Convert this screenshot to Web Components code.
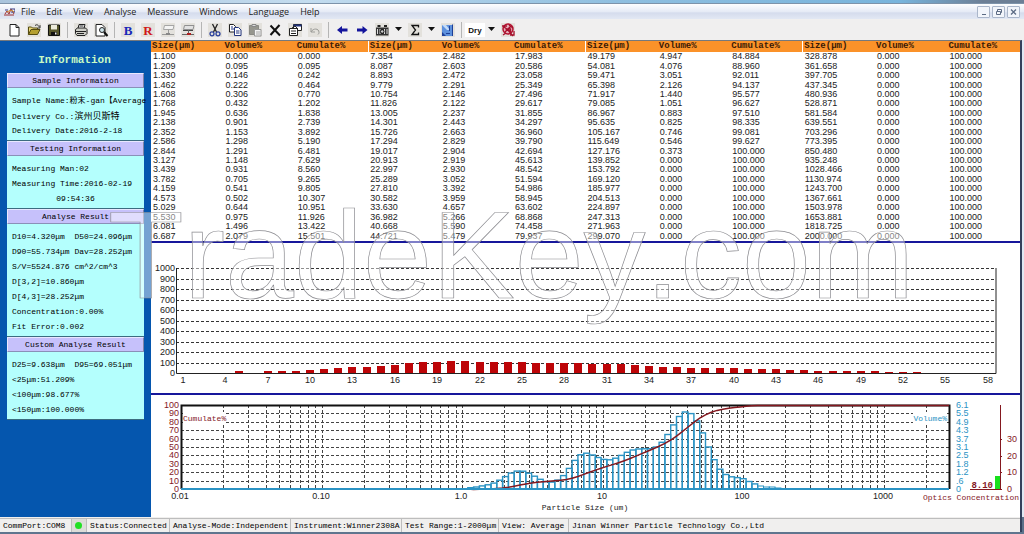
<!DOCTYPE html>
<html lang="en">
<head>
<meta charset="utf-8">
<title>Particle Size Analyser</title>
<style>
  html, body { margin: 0; height: 100%; }
  body {
    --mono: "Liberation Mono", "Noto Sans CJK SC", monospace;
    --sans: "Liberation Sans", "Noto Sans CJK SC", sans-serif;
    --ui: "Open Sans", "Noto Sans", sans-serif;
    --navy: #17179b;
    --maroon: #84181f;
    --cyan: #2b93c4;
    font: 8px/10px var(--mono);
    color: #000;
    background: #5b7089;
  }
</style>
</head>
<body>
<app-window>
  <menu-bar slot="menu"></menu-bar>
  <tool-bar slot="tools"></tool-bar>
  <side-panel slot="side" heading="Information">
    <info-card heading="Sample Information">
      <info-line>Sample Name:粉末-gan【Average</info-line>
      <info-line>Delivery Co.:<cjk-text>滨州贝斯特</cjk-text></info-line>
      <info-line>Delivery Date:2016-2-18</info-line>
    </info-card>
    <info-card heading="Testing Information">
      <info-line>Measuring Man:02</info-line>
      <info-line>Measuring Time:2016-02-19</info-line>
      <info-line center>09:54:36</info-line>
    </info-card>
    <info-card heading="Analyse Result">
      <info-line>D10=4.320μm  D50=24.096μm</info-line>
      <info-line>D90=55.734μm Dav=28.252μm</info-line>
      <info-line>S/V=5524.876 cm^2/cm^3</info-line>
      <info-line>D[3,2]=10.860μm</info-line>
      <info-line>D[4,3]=28.252μm</info-line>
      <info-line>Concentration:0.00%</info-line>
      <info-line>Fit Error:0.002</info-line>
    </info-card>
    <info-card heading="Custom Analyse Result">
      <info-line>D25=9.638μm  D95=69.051μm</info-line>
      <info-line>&lt;25μm:51.209%</info-line>
      <info-line>&lt;100μm:98.677%</info-line>
      <info-line>&lt;150μm:100.000%</info-line>
    </info-card>
  </side-panel>
  <size-table></size-table>
  <channel-chart></channel-chart>
  <distribution-chart></distribution-chart>
  <status-bar slot="status">
    <status-cell style="--basis:71px">CommPort:COM8</status-cell>
    <status-cell lamp style="--basis:15px"></status-cell>
    <status-cell style="--basis:83px">Status:Connected</status-cell>
    <status-cell style="--basis:121px">Analyse-Mode:Independent</status-cell>
    <status-cell style="--basis:111px">Instrument:Winner2308A</status-cell>
    <status-cell style="--basis:97px">Test Range:1-2000μm</status-cell>
    <status-cell style="--basis:70px">View: Average</status-cell>
    <status-cell grow>Jinan Winner Particle Technology Co.,Ltd</status-cell>
  </status-bar>
  <water-mark slot="overlay">TradeKey.com</water-mark>
</app-window>

<script>
const define = (name, html) => customElements.define(name, class extends HTMLElement {
  connectedCallback() {
    if (this.shadowRoot) return;
    const root = this.attachShadow({ mode: 'open' });
    const t = document.createElement('template');
    t.innerHTML = typeof html === 'function' ? html(this) : html;
    root.append(t.content.cloneNode(true));
  }
});

/* Measured size distribution: size in micrometres, volume %, cumulative %. */
const sizes = `1.100 1.209 1.330 1.462 1.608 1.768 1.945 2.138 2.352 2.586 2.844 3.127 3.439 3.782 4.159 4.573 5.029 5.530 6.081 6.687
7.354 8.087 8.893 9.779 10.754 11.826 13.005 14.301 15.726 17.294 19.017 20.913 22.997 25.289 27.810 30.582 33.630 36.982 40.668 44.721
49.179 54.081 59.471 65.398 71.917 79.085 86.967 95.635 105.167 115.649 127.176 139.852 153.792 169.120 185.977 204.513 224.897 247.313 271.963 299.070
328.878 361.658 397.705 437.345 480.936 528.871 581.584 639.551 703.296 773.395 850.480 935.248 1028.466 1130.974 1243.700 1367.661 1503.978 1653.881 1818.725 2000.000`.split(/\s+/);
const volumes = `0.000 0.095 0.146 0.222 0.306 0.432 0.636 0.901 1.153 1.298 1.291 1.148 0.931 0.705 0.541 0.502 0.644 0.975 1.496 2.079
2.482 2.603 2.472 2.291 2.146 2.122 2.237 2.443 2.663 2.829 2.904 2.919 2.930 3.052 3.392 3.959 4.657 5.266 5.590 5.479
4.947 4.076 3.051 2.126 1.440 1.051 0.883 0.825 0.746 0.546 0.373`.split(/\s+/);
const cumulates = `0.000 0.095 0.242 0.464 0.770 1.202 1.838 2.739 3.892 5.190 6.481 7.629 8.560 9.265 9.805 10.307 10.951 11.926 13.422 15.501
17.983 20.586 23.058 25.349 27.496 29.617 31.855 34.297 36.960 39.790 42.694 45.613 48.542 51.594 54.986 58.945 63.602 68.868 74.458 79.937
84.884 88.960 92.011 94.137 95.577 96.627 97.510 98.335 99.081 99.627 100.000`.split(/\s+/);
while (volumes.length < 80) { volumes.push('0.000'); cumulates.push('100.000'); }

define('app-window', `<style>
  :host { display: flex; flex-direction: column; position: relative; min-height: 100vh; overflow: hidden; }
  .caption { height: 4px; background: linear-gradient(90deg, #a9c4dc, #c3dcef 30%, #8fbfe0 60%, #78b4dc 88%, #6c7f96 96%); border-bottom: 1px solid #7d93aa; box-sizing: border-box; }
  .body { display: flex; flex: 1; border-top: 1px solid #77797c; margin-right: 2px; border-right: 2px solid #33405c; background: #fff; }
  main { flex: 1; min-width: 0; }
  .frame { background: #dfe8f3; flex: 1; display: flex; flex-direction: column; }
  .base { height: 2px; background: #5f758e; }
</style>
<div class="caption"></div>
<slot name="menu"></slot>
<slot name="tools"></slot>
<div class="frame"><div class="body"><slot name="side"></slot><main><slot></slot></main></div></div>
<slot name="status"></slot>
<div class="base"></div>
<slot name="overlay"></slot>`);

define('menu-bar', `<style>
  :host { display: flex; align-items: center; height: 15px; padding: 0 4px; background: linear-gradient(#fdfeff, #e6ebf6 50%, #d5dced 60%, #e2e8f4); font: 9px/14px var(--ui); color: #222; }
  nav { display: flex; flex: 1; gap: 11px; margin-left: 6px; }
  button { all: unset; font: inherit; }
  .win { display: flex; gap: 2px; }
  .win button { width: 11px; height: 10px; border: 1px solid #aab6ca; background: #f2f5fb; border-radius: 1px; display: flex; }
  svg { display: block; }
</style>
<svg width="11" height="10" viewBox="0 0 11 10" fill="none"><path d="M0 8h10M1 7l2-3 2 3 2-5 3 5" stroke="#a03030"/><path d="M1 3h3M6 2h5v3H7" stroke="#3a3a80"/><path d="M3 5l4-2 3 2" stroke="#d0902c"/></svg>
<nav>${['File', 'Edit', 'View', 'Analyse', 'Meassure', 'Windows', 'Language', 'Help'].map(m => `<button>${m}</button>`).join('')}</nav>
<div class="win">
  <button aria-label="Minimize"><svg width="11" height="10"><path d="M4 7.500h4" stroke="#5c6b84"/></svg></button>
  <button aria-label="Restore"><svg width="11" height="10" fill="none" stroke="#5c6b84"><path d="M4.500 4V2.500h4v3H7M3.500 4.500h4v3h-4z"/></svg></button>
  <button aria-label="Close"><svg width="11" height="10"><path d="M3 2.500l5 5M8 2.500l-5 5" stroke="#5c6b84" stroke-width="1.300"/></svg></button>
</div>`);

const icon = {
  new: ['New', '<path d="M3 1.500h6l3 3v8.500H3z" fill="#fff" stroke="#222"/><path d="M9 1.500v3h3" fill="none" stroke="#222"/>'],
  open: ['Open', '<path d="M1.500 11.500V4h3l1 1h5v2" fill="#e8d77a" stroke="#554c10"/><path d="M1.500 11.500l2.500-5h9l-2.500 5z" fill="#b5a030" stroke="#554c10"/><path d="M8 2.500c2-1.500 3-.5 4 1l1-1v2.500h-2.500" fill="none" stroke="#333"/>'],
  save: ['Save', '<path d="M1.500 2h11v10.500h-11z" fill="#55552a" stroke="#111"/><path d="M4 2h6v4.500H4z" fill="#ecebdc"/><path d="M4 9h6v3.500H4z" fill="#111"/><path d="M8 9.500h1.500v2H8z" fill="#eee"/>'],
  print: ['Print', '<path d="M4 5.500l1-4h6l-1 4z" fill="#fff" stroke="#222"/><path d="M1.500 6.500l2-1.500h8l1.500 1.500v4l-2 2h-8l-1.500-2z" fill="#cfcfc8" stroke="#222"/><path d="M2 8.500h10M5.500 3h4M3 10.500h7" stroke="#222"/>'],
  preview: ['Preview', '<path d="M2 1.500h6l3 3v8.500H2z" fill="#fff" stroke="#222"/><circle cx="8" cy="7" r="2.500" fill="#cfe4ea" stroke="#222"/><path d="M10 9l3.500 4" stroke="#111" stroke-width="2"/>'],
  b: ['Background', '<text x="7" y="12" text-anchor="middle" font-family="Liberation Serif, serif" font-size="13" font-weight="700" fill="#1a28b8">B</text>'],
  r: ['Result', '<text x="7" y="12" text-anchor="middle" font-family="Liberation Serif, serif" font-size="13" font-weight="700" fill="#d01717">R</text>'],
  dev1: ['Disconnect', '<path d="M3.500 2.500h9.500l-1 4H2.500z" fill="#f4f4f4" stroke="#a5a5a5"/><path d="M7.500 7v3M1 11.500h12" stroke="#999"/><path d="M5 11h4" stroke="#888" stroke-width="2"/>'],
  dev2: ['Connect', '<path d="M3.500 2.500h9.500l-1 4H2.500z" fill="#e2e2e2" stroke="#909090"/><path d="M2 7.500h10" stroke="#444"/><path d="M7.500 7v3M1 11.500h12" stroke="#666"/><path d="M6 11h4" stroke="#b02020" stroke-width="2"/>'],
  cut: ['Cut', '<path d="M4.500 1l4 8M9.500 1l-4 8" stroke="#222" fill="none" stroke-width="1.300"/><circle cx="4" cy="10.800" r="2" fill="none" stroke="#2a3f9c" stroke-width="1.300"/><circle cx="10" cy="10.800" r="2" fill="none" stroke="#2a3f9c" stroke-width="1.300"/>'],
  copy: ['Copy', '<path d="M1.500 1.500h4l2 2V9h-6z" fill="#fff" stroke="#222"/><path d="M6.500 4.500h4l2.500 2.500v5.500H6.500z" fill="#fff" stroke="#23357e"/><path d="M3 4h2M3 6h3M8 8h3.500M8 10h3.500" stroke="#23357e"/>'],
  paste: ['Paste', '<path d="M1.500 2.500h9v9h-9z" fill="#96968e" stroke="#8a8a84"/><path d="M4 1.500h4v2H4z" fill="#ddd" stroke="#888"/><path d="M6.500 6.500h6.500v6.500H6.500z" fill="#f4f4f4" stroke="#999"/><path d="M8 9h4M8 11h4" stroke="#aaa"/>'],
  del: ['Delete', '<path d="M2.500 2.500l9.500 10M11.500 2L2.500 12" stroke="#111" stroke-width="2"/>'],
  props: ['Properties', '<path d="M5.500 1.500h8v6h-8z" fill="#fff" stroke="#222"/><path d="M5.500 2.500h8" stroke="#23357e" stroke-width="2"/><path d="M1.500 5.500h8v7h-8z" fill="#fff" stroke="#222"/><path d="M3 8h5M3 10.500h5" stroke="#222"/><path d="M4 5l3-2 3 3" fill="none" stroke="#222"/>'],
  undo: ['Undo', '<path d="M3 5v4h4M3 9c2-4 8-4 8 .5 0 1-.5 1.500-1 2" fill="none" stroke="#9c9c98"/>'],
  left: ['Previous', '<path d="M2 7l5-4v2.500h5.500v3H7V11z" fill="#14149c"/>'],
  right: ['Next', '<path d="M12.500 7l-5-4v2.500H2v3h5.500V11z" fill="#14149c"/>'],
  camera: ['Snapshot', '<path d="M1 4.500h12.500v8H1z" fill="#333"/><path d="M2.500 2h3v2h-3zM9 2h3v2H9z" fill="#222"/><path d="M2.500 6v5M5 6v5M9.500 6v5M12 6v5" stroke="#ddd"/><circle cx="7.200" cy="8.500" r="1.800" fill="#ccc" stroke="#111"/>'],
  sigma: ['Sum', '<path d="M10.500 4.500V2.500H4L7.500 7 4 11.500h6.500v-2" fill="none" stroke="#111" stroke-width="1.300"/>'],
  view: ['Report', '<path d="M1 2h11v11H1z" fill="#5d90dc"/><path d="M1 2h4l4 5H6z" fill="#c4dcf8"/><path d="M1 9l4 4H1z" fill="#1d3f97"/><path d="M11.500 1.500V13M5 10.500h4M8.500 3v5" fill="none" stroke="#1d3f97"/>'],
  dry: ['Dry', '<path d="M-3 0h20v14H-3z" fill="#fff"/><text x="7" y="10" text-anchor="middle" font-family="Liberation Sans, sans-serif" font-size="8" font-weight="700" fill="#111">Dry</text>'],
  stamp: ['Measure', '<circle cx="7" cy="6" r="5" fill="#e6b0bb" stroke="#b3122f" stroke-width="1.500"/><path d="M3 4l7 5M4 9l6-6M1 3h5M8 2l4 3M6 6l6 7M2 12l3-2M9 12h4V8M4.500 6h5v3" stroke="#a60f2c" stroke-width="1.300" fill="none"/>'],
};
define('tool-bar', () => {
  const order = 'new open save | print preview | b r dev1 dev2 | cut copy paste del props undo | left right camera v sigma v view | dry v stamp'.split(' ');
  const plain = ['new', 'dry', 'del', 'left', 'right'];
  return `<style>
  :host { display: flex; align-items: center; height: 21px; padding-left: 4px; background: #f0efef; }
  button { all: unset; display: grid; place-items: center; width: 20px; height: 16px; }
  button svg { background: #e3e1dc; overflow: visible; }
  button.plain svg { background: none; }
  button.menu { width: 13px; }
  button.menu svg { background: none; }
  i { width: 1px; height: 16px; margin: 0 3px; background: #b5b5b5; }
</style>` + order.map(k => k === '|' ? '<i></i>'
    : k === 'v' ? '<button class="menu" aria-label="More"><svg width="7" height="5"><path d="M0 0h7L3.500 4z" fill="#111"/></svg></button>'
    : `<button class="${plain.includes(k) ? 'plain' : ''}" aria-label="${icon[k][0]}"><svg width="14" height="14" viewBox="0 0 14 14">${icon[k][1]}</svg></button>`).join('');
});

define('side-panel', el => `<style>
  :host { display: block; width: 137px; padding: 11px 7px 0; background: #0556ae; }
  h1 { margin: 0 0 5px; padding-right: 2px; font: 700 11px/16px var(--mono); color: #c9fbc4; text-align: center; }
</style><h1>${el.getAttribute('heading')}</h1><slot></slot>`);

define('info-card', el => `<style>
  :host { display: block; padding-bottom: 2px; background: #b4fffd; border-bottom: 1px solid #3c6c80; }
  h2 { margin: 0 0 5px; box-sizing: border-box; height: 15px; font: 8px/13px var(--mono); text-align: center; background: #c6c1fb; border: 1px solid #e9e8ff; border-right-color: #7f83a8; border-bottom-color: #8a90b8; }
</style><h2>${el.getAttribute('heading')}</h2><slot></slot>`);

define('info-line', `<style>
  :host { display: block; padding: 0 0 0 5px; height: 15px; line-height: 15px; white-space: pre; }
  :host([center]) { padding: 0; text-align: center; }
</style><slot></slot>`);

define('cjk-text', `<style>:host { font: 9px/15px "Noto Sans CJK SC", sans-serif; }</style><slot></slot>`);

define('size-table', () => {
  const names = ['Size(μm)', 'Volume%', 'Cumulate%'];
  const head = [0, 1, 2, 3].map(() => names.map((n, i) => `<th${i ? '' : ' class="g"'}>${n}</th>`).join('')).join('');
  const rows = Array.from({ length: 20 }, (_, r) => '<tr>' + [0, 1, 2, 3].map(g => {
    const k = g * 20 + r;
    return `<td>${sizes[k]}</td><td>${volumes[k]}</td><td>${cumulates[k]}</td>`;
  }).join('') + '</tr>').join('');
  return `<style>
  :host { display: block; border-bottom: 2px solid var(--navy); }
  table { width: 100%; height: 200px; table-layout: fixed; border-collapse: collapse; }
  th { height: 11px; padding: 0 0 0 1px; text-align: left; font: 700 9px/11px var(--mono); background: #fb9229; color: #3a1a06; }
  th.g:not(:first-child) { border-left: 1px solid #fff; }
  td { padding: 0 0 0 2px; font: 9px/9px var(--sans); color: #222; }
</style><table><thead><tr>${head}</tr></thead><tbody>${rows}</tbody></table>`;
});

const label = (x, y, s, anchor = 'middle', extra = '') => `<text x="${x}" y="${y}" text-anchor="${anchor}" ${extra}>${s}</text>`;

define('channel-chart', () => {
  const counts = [3, 3, 3, 3, 15, 3, 15, 16, 17, 24, 36, 48, 57, 58, 66, 80, 95, 100, 107, 115, 115, 108, 108, 107, 102, 98, 98, 96, 94, 90, 83, 82, 76, 68, 60, 58, 50, 48, 48, 47, 40, 39, 34, 33, 24, 18, 18, 18, 18, 17, 10, 12, 12, 4, 4, 4, 3, 3];
  const left = 25, right = 845, base = 130, top = 25;
  let g = '';
  for (let v = 0; v <= 10; v++) {
    const y = base - v * (base - top) / 10;
    if (v) g += `<path class="grid" d="M${left} ${Math.round(y) + .5}H${right}"/>`;
    g += label(left - 1, Math.round(y) + 3, v * 100, 'end');
  }
  counts.forEach((c, i) => {
    const x = Math.round(32 + i * 14.12), h = Math.round(c * .105);
    if (h) g += `<rect x="${x - 4}" y="${base - h}" width="8" height="${h}" fill="#bd0508"/>`;
    if (i % 3 === 0) g += label(x, 140, i + 1);
  });
  return `<style>
  :host { display: block; border-bottom: 2px solid var(--navy); }
  svg { display: block; width: 100%; font: 9px var(--sans); fill: #222; }
  .grid { stroke: #333; stroke-dasharray: 3 2; }
</style><svg viewBox="0 0 869 150" role="img" aria-label="Channel signal">${g}<path d="M${left + .5} ${top}V${base + .5}H${right}V${top}" fill="none" stroke="#222"/></svg>`;
});

define('distribution-chart', () => {
  const left = 30, right = 798, top = 10, base = 94, dec = 140.5;
  const px = s => left + (Math.log10(s) + 2) * dec;
  const f = n => n.toFixed(1);
  let g = '';
  const yr = ['6.1', '5.5', '4.9', '4.3', '3.7', '3.1', '2.5', '1.8', '1.2', '.6', '0'];
  for (let v = 0; v <= 10; v++) {
    const y = Math.round(base - v * (base - top) / 10);
    if (v && v < 10) g += `<path class="grid" d="M${left} ${y + .5}H${right}"/>`;
    g += label(left - 2, y + 3, v * 10, 'end', 'fill="var(--maroon)"');
    g += label(805, y + 3, yr[10 - v], 'start', 'fill="var(--cyan)"');
  }
  for (let d = -2; d <= 3; d++) for (let m = 1; m < 10; m++) {
    const x = Math.round(px(m * 10 ** d));
    if (x > left && x < right - 4) g += `<path class="grid" d="M${x + .5} ${top}V${base}"/>`;
  }
  ['0.01', '0.10', '1.0', '10', '100', '1000'].forEach((s, i) => g += label(Math.round(left + i * dec) - 1, 104, s));
  g += '<path d="M32 17h43v11H32zM762 17h34v11h-34z" fill="#fff"/>';
  g += label(32, 26, 'Cumulate%', 'start', 'class="m" fill="var(--maroon)"');
  g += label(796, 26, 'Volume%', 'end', 'class="m" fill="var(--cyan)"');
  g += `<path d="M${left + .5} ${base}V${top + .5}H${right + .5}V${base}" fill="none" stroke="#111" stroke-width="2"/>`;
  let line = `M${f(px(1.1))} ${base}`;
  for (let i = 1; i < 51; i++) {
    const x0 = px(+sizes[i - 1]), x1 = px(+sizes[i]), h = volumes[i] / 6.1 * (base - top);
    g += `<rect x="${f(x0)}" y="${f(base - h)}" width="${f(x1 - x0)}" height="${f(h)}" fill="none" stroke="var(--cyan)" stroke-width="1.400"/>`;
    line += `L${f(x1)} ${f(base - cumulates[i] * (base - top) / 100 + .5)}`;
  }
  /* Closing steps of the histogram tail. */
  [3, 2, 2, 1].forEach((h, k) => {
    const x0 = px(+sizes[50 + k]), x1 = px(+sizes[51 + k]);
    g += `<rect x="${f(x0)}" y="${base - h}" width="${f(x1 - x0)}" height="${h}" fill="none" stroke="var(--cyan)"/>`;
  });
  g += `<path d="${line}H${right}" fill="none" stroke="var(--maroon)" stroke-width="1.500"/>`;
  g += `<path d="M${left} ${base}H${right}" stroke="var(--cyan)" stroke-width="2"/>`;
  g += label(434, 115, 'Particle Size (um)', 'middle', 'class="m"');
  g += '<rect x="844" y="81" width="5" height="13" fill="#18e01c"/><path d="M849.500 10v84.500H819M849 44.500h2M849 61.500h2M849 77.500h2M849 94.500h2" fill="none" stroke="var(--maroon)"/>';
  [['30', 47], ['20', 64], ['10', 80], ['0', 97]].forEach(([s, y]) => g += label(856, y, s, 'start', 'fill="var(--maroon)"'));
  g += label(842, 93, '8.10', 'end', 'class="b" fill="var(--maroon)"');
  g += label(868, 105, 'Optics Concentration', 'end', 'class="m" fill="var(--maroon)"');
  return `<style>
  :host { display: block; }
  svg { display: block; width: 100%; font: 9px var(--sans); fill: #222; }
  .grid { stroke: #444; stroke-dasharray: 3 2; }
  .m { font: 8px var(--mono); }
  .b { font: 700 9px var(--mono); }
</style><svg viewBox="0 0 869 122" role="img" aria-label="Particle size distribution">${g}</svg>`;
});

define('status-bar', `<style>
  :host { display: flex; height: 15px; background: #f0efee; margin-right: 2px; border-right: 2px solid #33405c; }
</style><slot></slot>`);

define('status-cell', el => `<style>
  :host { box-sizing: border-box; flex: 0 0 var(--basis, auto); height: 14px; margin-top: 1px; padding-left: 3px; line-height: 14px; white-space: pre; overflow: hidden; border-top: 1px solid #bdbdbd; border-left: 1px solid #bdbdbd; }
  :host(:first-child) { border-left: 0; }
  :host([grow]) { flex: 1 1 0; }
  :host([lamp]) { background: #dcdcd8; }
  b { display: block; width: 7px; height: 7px; margin-top: 3px; border-radius: 4px; background: #22e024; }
</style>${el.hasAttribute('lamp') ? '<b></b>' : ''}<slot></slot>`);

define('water-mark', el => `<style>
  :host { position: absolute; inset: 0 0 auto 0; pointer-events: none; }
  svg { display: block; width: 100%; }
  text { font: 124px "Liberation Sans", sans-serif; font-kerning: none; fill: rgba(255,255,255,.45); stroke: #8d8d92; stroke-width: .7px; }
</style><svg viewBox="0 0 1024 400"><text x="108" y="298">${el.textContent}</text></svg>`);
</script>
</body>
</html>
